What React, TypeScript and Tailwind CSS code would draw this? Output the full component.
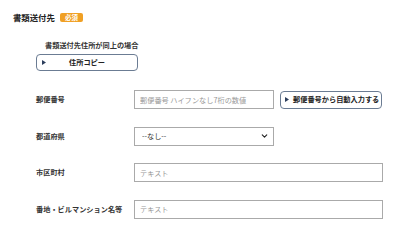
import { ChevronDown } from 'lucide-react';

const font = { fontFamily: '"Noto Sans CJK JP", "Noto Sans", sans-serif' };

function Tri() {
  return (
    <svg width="4" height="5" viewBox="0 0 4 5" className="shrink-0">
      <path d="M0 0 L4 2.5 L0 5 Z" fill="#2c3e5c" />
    </svg>
  );
}

function Row({ label, children }: { label: string; children: React.ReactNode }) {
  return (
    <div className="flex items-center">
      <div className="w-[98px] shrink-0 text-[7.2px] font-bold text-[#333]">{label}</div>
      {children}
    </div>
  );
}

export default function App() {
  const inputCls =
    'h-[19px] border border-[#aaa] bg-white px-[5px] text-[7.2px] text-[#333] placeholder:text-[#999] outline-none';

  return (
    <div className="w-[400px] h-[228px] bg-white overflow-hidden" style={font}>
      <div className="pt-[12px] pl-[13px] flex items-center gap-[5px]">
        <span className="text-[8.4px] font-bold text-[#222] leading-[11px]">書類送付先</span>
        <span className="bg-[#f0a024] text-white text-[6.5px] font-bold leading-[9px] px-[5px] rounded-[2px]">必須</span>
      </div>

      <div className="pl-[36px] mt-[17px]">
        <div className="pl-[9px] text-[7.2px] font-bold text-[#333] leading-[10px]">書類送付先住所が同上の場合</div>
        <button className="mt-[4px] w-[102px] h-[17px] border border-[#6b7c93] rounded-[4px] flex items-center px-[5px] bg-white">
          <Tri />
          <span className="flex-1 text-center text-[7.2px] font-bold text-[#222] pr-[4px]">住所コピー</span>
        </button>
      </div>

      <div className="pl-[36px] mt-[19px] flex flex-col gap-[17.5px]">
        <Row label="郵便番号">
          <input className={`${inputCls} w-[140px]`} placeholder="郵便番号 ハイフンなし7桁の数値" />
          <button className="ml-[6px] h-[18px] w-[102px] border border-[#6b7c93] rounded-[4px] flex items-center gap-[4px] px-[4px] bg-white">
            <Tri />
            <span className="text-[7.2px] font-bold text-[#222] whitespace-nowrap">郵便番号から自動入力する</span>
          </button>
        </Row>
        <Row label="都道府県">
          <div className="relative flex">
            <select className={`${inputCls} w-[140px] appearance-none pl-[7px]`} defaultValue="">
              <option value="">--なし--</option>
            </select>
            <ChevronDown
              className="absolute right-[5px] top-1/2 -translate-y-1/2 w-[9px] h-[9px] text-[#222] pointer-events-none"
              strokeWidth={3}
            />
          </div>
        </Row>
        <Row label="市区町村">
          <input className={`${inputCls} w-[249px]`} placeholder="テキスト" />
        </Row>
        <Row label="番地・ビルマンション名等">
          <input className={`${inputCls} w-[249px]`} placeholder="テキスト" />
        </Row>
      </div>
    </div>
  );
}
